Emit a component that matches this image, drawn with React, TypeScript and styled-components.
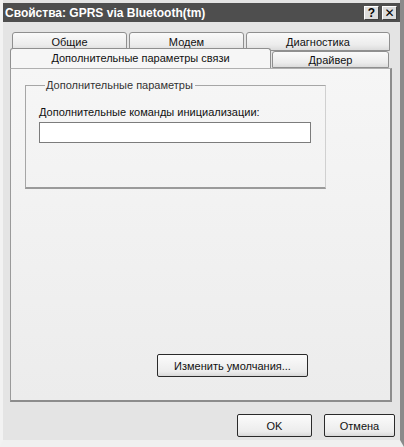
import React from 'react';
import styled, { createGlobalStyle } from 'styled-components';

const GlobalStyle = createGlobalStyle`
  html, body {
    margin: 0;
    padding: 0;
    background: #e6e6e6;
  }
  body {
    font-family: Tahoma, "Liberation Sans", "DejaVu Sans", sans-serif;
    font-size: 11px;
    color: #111;
  }
`;

const Window = styled.div`
  width: 404px;
  height: 447px;
  box-sizing: border-box;
  display: flex;
  flex-direction: column;
  background: #e4e4e4;
  border-left: 3px solid #f2f2f2;
  border-right: 4px solid #8a8a8a;
  border-bottom: 7px solid #f0f0f0;
  padding-top: 3px;
`;

const TitleBar = styled.div`
  height: 19px;
  display: flex;
  align-items: center;
  background: #4e4e4e;
  padding: 0 3px 0 2px;
`;

const TitleText = styled.div`
  flex: 1;
  color: #fff;
  font-weight: bold;
  font-size: 12px;
`;

const CaptionButton = styled.div`
  width: 15px;
  height: 14px;
  margin-left: 3px;
  box-sizing: border-box;
  background: #dcdcdc;
  border: 1px solid;
  border-color: #fff #404040 #404040 #fff;
  display: flex;
  align-items: center;
  justify-content: center;
  font-weight: bold;
  font-size: 12px;
  line-height: 1;
  color: #000;
`;

const Body = styled.div`
  flex: 1;
  display: flex;
  flex-direction: column;
  padding: 10px 8px 0 7px;
`;

const TabRow = styled.div<{ $indent: number; $front?: boolean }>`
  display: flex;
  align-items: flex-end;
  padding-left: ${(p) => p.$indent}px;
  position: relative;
  z-index: ${(p) => (p.$front ? 1 : 0)};
  margin-top: ${(p) => (p.$front ? -3 : 0)}px;
`;

const Tab = styled.div<{ $width: number; $height: number; $active?: boolean }>`
  width: ${(p) => p.$width}px;
  height: ${(p) => p.$height}px;
  box-sizing: border-box;
  margin-right: ${(p) => (p.$active ? 1 : 2)}px;
  display: flex;
  align-items: ${(p) => (p.$active ? 'flex-start' : 'center')};
  justify-content: center;
  padding-top: ${(p) => (p.$active ? 3 : 1)}px;
  border: 1px solid #8f8f8f;
  border-bottom: ${(p) => (p.$active ? 'none' : '1px solid #8f8f8f')};
  border-radius: 3px 3px 0 0;
  background: ${(p) =>
    p.$active ? '#f6f6f6' : 'linear-gradient(#fafafa, #ececec 70%, #dcdcdc)'};
  font-size: 11px;
  white-space: nowrap;
`;

const Panel = styled.div`
  width: 382px;
  height: 334px;
  box-sizing: border-box;
  border: 1px solid #9a9a9a;
  border-top-color: #b0b0b0;
  border-right: 2px solid #8c8c8c;
  border-bottom: 2px solid #8c8c8c;
  background: linear-gradient(#f6f6f6, #ececec);
  display: flex;
  flex-direction: column;
  padding: 10px 0 23px 14px;
`;

const GroupBox = styled.fieldset`
  width: 301px;
  height: 110px;
  box-sizing: border-box;
  margin: 0;
  padding: 15px 0 0 13px;
  border: 1px solid #a6a6a6;
  border-right-color: #d0d0d0;
  border-bottom: 2px solid #9a9a9a;
  border-radius: 0;
`;

const Legend = styled.legend`
  padding: 0 2px 0 1px;
  margin-left: 6px;
  color: #333;
  font-size: 11px;
`;

const FieldLabel = styled.div`
  font-size: 11px;
  margin-bottom: 4px;
`;

const TextInput = styled.div`
  width: 272px;
  height: 21px;
  box-sizing: border-box;
  background: #fff;
  border: 1px solid #7c7c7c;
`;

const Button = styled.div<{ $width: number }>`
  width: ${(p) => p.$width}px;
  height: 23px;
  box-sizing: border-box;
  display: flex;
  align-items: center;
  justify-content: center;
  background: linear-gradient(#fbfbfb, #ececec 80%, #d8d8d8);
  border: 1px solid #2a2a2a;
  border-radius: 2px;
  font-size: 11px;
`;

const PanelFooter = styled.div`
  margin-top: auto;
  padding-left: 132px;
`;

const DialogButtons = styled.div`
  display: flex;
  justify-content: flex-end;
  gap: 12px;
  padding: 12px 0 0 0;
  margin-right: -3px;
`;

export default function App() {
  return (
    <>
      <GlobalStyle />
      <Window>
        <TitleBar>
          <TitleText>Свойства: GPRS via Bluetooth(tm)</TitleText>
          <CaptionButton>?</CaptionButton>
          <CaptionButton>✕</CaptionButton>
        </TitleBar>
        <Body>
          <TabRow $indent={2}>
            <Tab $width={115} $height={19}>Общие</Tab>
            <Tab $width={115} $height={19}>Модем</Tab>
            <Tab $width={144} $height={19}>Диагностика</Tab>
          </TabRow>
          <TabRow $indent={0} $front>
            <Tab $width={261} $height={20} $active>
              Дополнительные параметры связи
            </Tab>
            <Tab $width={117} $height={17}>Драйвер</Tab>
          </TabRow>
          <Panel>
            <GroupBox>
              <Legend>Дополнительные параметры</Legend>
              <FieldLabel>Дополнительные команды инициализации:</FieldLabel>
              <TextInput />
            </GroupBox>
            <PanelFooter>
              <Button $width={151}>Изменить умолчания...</Button>
            </PanelFooter>
          </Panel>
          <DialogButtons>
            <Button $width={75}>OK</Button>
            <Button $width={71}>Отмена</Button>
          </DialogButtons>
        </Body>
      </Window>
    </>
  );
}
